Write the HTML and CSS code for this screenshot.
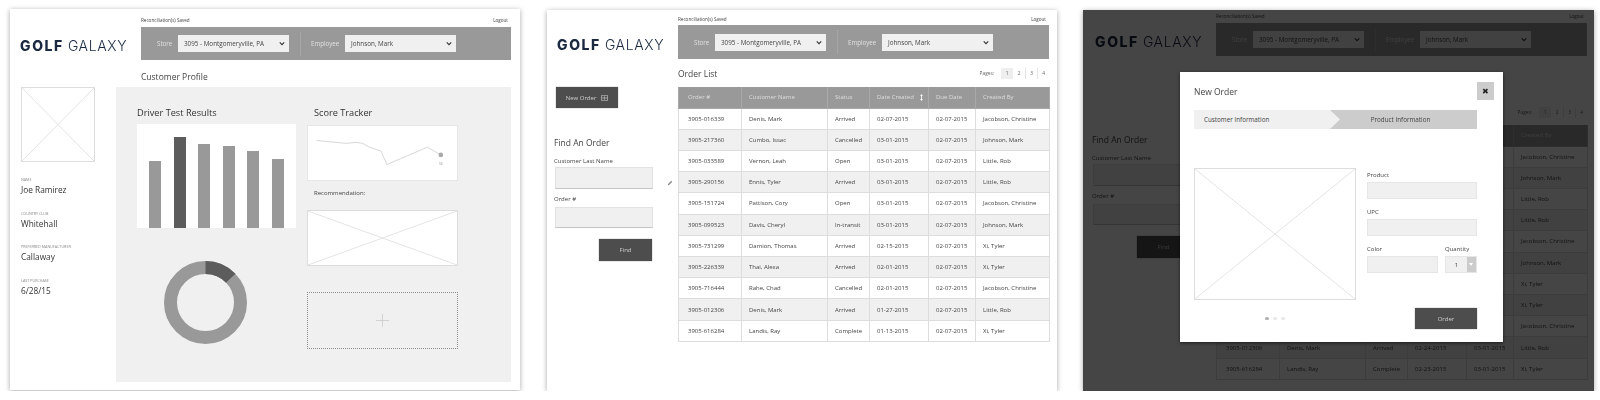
FILE: index.html
```html
<!DOCTYPE html>
<html>
  <head>
    <title>Golf Galaxy Wireframes</title>
    <link rel="stylesheet" href="styles.css">
  </head>

  <body>
    <div class="board">

      <!-- customer profile -->
      <section class="panel panel-profile">
        <header class="header">
          <div class="logo"><b>GOLF</b> GALAXY</div>
          <div class="header-main">
            <div class="top-links"><span>Reconciliation(s) Saved</span><span>Logout</span></div>
            <div class="top-bar">
              <span class="bar-label store-label">Store</span>
              <div class="select"><span>3095 - Montgomeryville, PA</span><svg class="chevron" viewBox="0 0 8 6"><path d="M1 1.5 4 4.5 7 1.5"/></svg></div>
              <span class="bar-divider"></span>
              <span class="bar-label employee-label">Employee</span>
              <div class="select"><span>Johnson, Mark</span><svg class="chevron" viewBox="0 0 8 6"><path d="M1 1.5 4 4.5 7 1.5"/></svg></div>
            </div>
          </div>
        </header>
        <h2 class="profile-title">Customer Profile</h2>
        <div class="profile">
          <aside class="sidebar">
            <div class="placeholder photo"><svg viewBox="0 0 100 100" preserveAspectRatio="none"><path d="M0 0 100 100M100 0 0 100"/></svg></div>
            <div class="field field-first"><p class="field-label">NAME</p><p class="field-value">Joe Ramirez</p></div>
            <div class="field"><p class="field-label">COUNTRY CLUB</p><p class="field-value">Whitehall</p></div>
            <div class="field"><p class="field-label">PREFERRED MANUFACTURER</p><p class="field-value">Callaway</p></div>
            <div class="field"><p class="field-label">LAST PURCHASE</p><p class="field-value">6/28/15</p></div>
          </aside>
          <div class="results">
            <div class="results-left">
              <h3 class="results-title">Driver Test Results</h3>
              <div class="bars">
                <div class="bar" style="height: 67px"></div>
                <div class="bar bar-dark" style="height: 91px"></div>
                <div class="bar" style="height: 84px"></div>
                <div class="bar" style="height: 82px"></div>
                <div class="bar" style="height: 77px"></div>
                <div class="bar" style="height: 69px"></div>
              </div>
              <svg class="donut" viewBox="0 0 83 83">
                <circle class="donut-base" cx="41.5" cy="41.5" r="35"/>
                <circle class="donut-part" cx="41.5" cy="41.5" r="35" pathLength="100" stroke-dasharray="12.8 87.2" transform="rotate(-90 41.5 41.5)"/>
              </svg>
            </div>
            <div class="results-right">
              <h3 class="results-title tracker-title">Score Tracker</h3>
              <div class="tracker">
                <svg viewBox="0 0 151 56">
                  <path class="tracker-line" d="M7 15 38 18 48 17 55 18 62 22 74 26 80 40 122 22 136 30"/>
                  <circle class="tracker-dot" cx="136" cy="30" r="2.4"/>
                  <text class="tracker-value" x="136" y="40" text-anchor="middle">56</text>
                </svg>
              </div>
              <p class="recommendation">Recommendation:</p>
              <div class="placeholder wide"><svg viewBox="0 0 100 100" preserveAspectRatio="none"><path d="M0 0 100 100M100 0 0 100"/></svg></div>
              <div class="dropzone"><svg viewBox="0 0 13 13"><path d="M6.5 0V13M0 6.5H13"/></svg></div>
            </div>
          </div>
        </div>
      </section>

      <!-- order list -->
      <section class="panel panel-orders">
        <header class="header">
          <div class="logo"><b>GOLF</b> GALAXY</div>
          <div class="header-main">
            <div class="top-links"><span>Reconciliation(s) Saved</span><span>Logout</span></div>
            <div class="top-bar">
              <span class="bar-label store-label">Store</span>
              <div class="select"><span>3095 - Montgomeryville, PA</span><svg class="chevron" viewBox="0 0 8 6"><path d="M1 1.5 4 4.5 7 1.5"/></svg></div>
              <span class="bar-divider"></span>
              <span class="bar-label employee-label">Employee</span>
              <div class="select"><span>Johnson, Mark</span><svg class="chevron" viewBox="0 0 8 6"><path d="M1 1.5 4 4.5 7 1.5"/></svg></div>
            </div>
          </div>
        </header>
        <div class="orders">
          <aside class="order-side">
            <button class="btn btn-new">New Order
              <svg class="new-icon" viewBox="0 0 8 7"><path d="M.5.5H7.5V6.5H.5ZM.5 3.5H7.5M4 1.5V5.5"/></svg>
            </button>
            <h3 class="find-title">Find An Order</h3>
            <p class="find-label">Customer Last Name</p>
            <div class="find-row">
              <div class="find-input"></div>
              <svg class="pencil" viewBox="0 0 8 8"><path d="M1 7 1.4 5.2 5.6 1 7 2.4 2.8 6.6Z"/></svg>
            </div>
            <p class="find-label find-label-next">Order #</p>
            <div class="find-input find-input-short"></div>
            <button class="btn btn-find">Find</button>
          </aside>
          <div class="order-main">
            <div class="list-head">
              <h2 class="list-title">Order List</h2>
              <div class="pager">
                <span class="pager-label">Pages:</span>
                <span class="page page-current">1</span><span class="page">2</span><span class="page page-line">3</span><span class="page page-line">4</span>
              </div>
            </div>
            <table class="order-table">
              <colgroup><col class="col-order"><col class="col-name"><col class="col-status"><col class="col-date"><col class="col-due"><col class="col-by"></colgroup>
              <thead>
                <tr><th>Order #</th><th>Customer Name</th><th>Status</th><th>Date Created <svg class="sort" viewBox="0 0 4 10"><path d="M2 0 4 3H0ZM2 10 0 7H4ZM1.4 3H2.6V7H1.4Z"/></svg></th><th>Due Date</th><th>Created By</th></tr>
              </thead>
              <tbody>
                <tr><td>3905-016339</td><td>Denis, Mark</td><td>Arrived</td><td>02-07-2015</td><td>02-07-2015</td><td>Jacobson, Christine</td></tr>
                <tr><td>3905-217360</td><td>Cumbo, Issac</td><td>Cancelled</td><td>03-01-2015</td><td>02-07-2015</td><td>Johnson, Mark</td></tr>
                <tr><td>3905-033589</td><td>Vernon, Leah</td><td>Open</td><td>03-01-2015</td><td>02-07-2015</td><td>Little, Rob</td></tr>
                <tr><td>3905-290156</td><td>Ennis, Tyler</td><td>Arrived</td><td>03-01-2015</td><td>02-07-2015</td><td>Little, Rob</td></tr>
                <tr><td>3905-151724</td><td>Pattison, Cory</td><td>Open</td><td>03-01-2015</td><td>02-07-2015</td><td>Jacobson, Christine</td></tr>
                <tr><td>3905-099523</td><td>Davis, Cheryl</td><td>In-transit</td><td>03-01-2015</td><td>02-07-2015</td><td>Johnson, Mark</td></tr>
                <tr><td>3905-731299</td><td>Damion, Thomas</td><td>Arrived</td><td>02-15-2015</td><td>02-07-2015</td><td>Xi, Tyler</td></tr>
                <tr><td>3905-226339</td><td>Thai, Alexa</td><td>Arrived</td><td>02-01-2015</td><td>02-07-2015</td><td>Xi, Tyler</td></tr>
                <tr><td>3905-716444</td><td>Rahe, Chad</td><td>Cancelled</td><td>02-01-2015</td><td>02-07-2015</td><td>Jacobson, Christine</td></tr>
                <tr><td>3905-012306</td><td>Denis, Mark</td><td>Arrived</td><td>01-27-2015</td><td>02-07-2015</td><td>Little, Rob</td></tr>
                <tr><td>3905-616284</td><td>Landis, Ray</td><td>Complete</td><td>01-13-2015</td><td>02-07-2015</td><td>Xi, Tyler</td></tr>
              </tbody>
            </table>
          </div>
        </div>
      </section>

      <!-- new order dialog over the order list -->
      <section class="panel panel-orders panel-dialog">
        <header class="header">
          <div class="logo"><b>GOLF</b> GALAXY</div>
          <div class="header-main">
            <div class="top-links"><span>Reconciliation(s) Saved</span><span>Logout</span></div>
            <div class="top-bar">
              <span class="bar-label store-label">Store</span>
              <div class="select"><span>3095 - Montgomeryville, PA</span><svg class="chevron" viewBox="0 0 8 6"><path d="M1 1.5 4 4.5 7 1.5"/></svg></div>
              <span class="bar-divider"></span>
              <span class="bar-label employee-label">Employee</span>
              <div class="select"><span>Johnson, Mark</span><svg class="chevron" viewBox="0 0 8 6"><path d="M1 1.5 4 4.5 7 1.5"/></svg></div>
            </div>
          </div>
        </header>
        <div class="orders">
          <aside class="order-side">
            <h3 class="find-title">Find An Order</h3>
            <p class="find-label">Customer Last Name</p>
            <div class="find-row"><div class="find-input"></div></div>
            <p class="find-label find-label-next">Order #</p>
            <div class="find-input find-input-short"></div>
            <button class="btn btn-find">Find</button>
          </aside>
          <div class="order-main">
            <div class="list-head">
              <div class="pager">
                <span class="pager-label">Pages:</span>
                <span class="page page-current">1</span><span class="page">2</span><span class="page page-line">3</span><span class="page page-line">4</span>
              </div>
            </div>
            <!-- cells behind the dialog are left empty -->
            <table class="order-table">
              <colgroup><col class="col-order"><col class="col-name"><col class="col-status"><col class="col-date"><col class="col-due"><col class="col-by"></colgroup>
              <thead>
                <tr><th></th><th></th><th></th><th></th><th></th><th>Created By</th></tr>
              </thead>
              <tbody>
                <tr><td></td><td></td><td></td><td></td><td></td><td>Jacobson, Christine</td></tr>
                <tr><td></td><td></td><td></td><td></td><td></td><td>Johnson, Mark</td></tr>
                <tr><td></td><td></td><td></td><td></td><td></td><td>Little, Rob</td></tr>
                <tr><td></td><td></td><td></td><td></td><td></td><td>Little, Rob</td></tr>
                <tr><td></td><td></td><td></td><td></td><td></td><td>Jacobson, Christine</td></tr>
                <tr><td></td><td></td><td></td><td></td><td></td><td>Johnson, Mark</td></tr>
                <tr><td></td><td></td><td></td><td></td><td></td><td>Xi, Tyler</td></tr>
                <tr><td></td><td></td><td></td><td></td><td></td><td>Xi, Tyler</td></tr>
                <tr><td></td><td></td><td></td><td></td><td></td><td>Jacobson, Christine</td></tr>
                <tr><td>3905-012306</td><td>Denis, Mark</td><td>Arrived</td><td>02-24-2015</td><td>03-01-2015</td><td>Little, Rob</td></tr>
                <tr><td>3905-616284</td><td>Landis, Ray</td><td>Complete</td><td>02-23-2015</td><td>03-01-2015</td><td>Xi, Tyler</td></tr>
              </tbody>
            </table>
          </div>
        </div>

        <div class="overlay"></div>
        <div class="modal">
          <div class="modal-head">
            <h2 class="modal-title">New Order</h2>
            <button class="modal-close">&#10006;</button>
          </div>
          <div class="stepper">
            <div class="step step-done">Customer Information</div>
            <div class="step step-active">Product Information</div>
          </div>
          <div class="modal-body">
            <div class="placeholder product-image"><svg viewBox="0 0 100 100" preserveAspectRatio="none"><path d="M0 0 100 100M100 0 0 100"/></svg></div>
            <div class="product-form">
              <label class="form-label form-label-first">Product</label>
              <div class="form-input"></div>
              <label class="form-label">UPC</label>
              <div class="form-input"></div>
              <div class="form-split">
                <div class="form-color">
                  <label class="form-label">Color</label>
                  <div class="form-input"></div>
                </div>
                <div class="form-qty">
                  <label class="form-label">Quantity</label>
                  <div class="qty-select"><span class="qty-value">1</span><span class="qty-arrow"></span></div>
                </div>
              </div>
            </div>
          </div>
          <div class="modal-foot">
            <div class="dots"><span class="dot dot-on"></span><span class="dot"></span><span class="dot"></span></div>
            <button class="btn btn-order">Order</button>
          </div>
        </div>
      </section>

    </div>
  </body>
</html>
```

FILE: styles.css
```css
:root {
  --bar-grey: #999999;
  --btn-dark: #4d4d4d;
  --bg-light: #f0f0f0;
  --line: #dddddd;
  --text-dark: #444444;
  --navy: #1b2a41;
}
* {
  box-sizing: border-box;
  margin: 0;
  padding: 0;
}
body {
  font-family: "Open Sans", "Liberation Sans", sans-serif;
  background: white;
  color: var(--text-dark);
  overflow: hidden;
}
h2,
h3 {
  font-weight: 400;
}

.board {
  display: grid;
  grid-template-columns: 537px 536px 511px;
  padding: 9px 0 0 10px;
  filter: blur(0.3px);
}

.panel {
  position: relative;
  height: 381px;
  background: white;
  box-shadow: 0 1px 5px rgba(0, 0, 0, 0.35);
  overflow: hidden;
}
.panel-profile {
  width: 510px;
  padding: 7px 0 0 10px;
}
.panel-orders {
  width: 510px;
  margin-top: 1px;
  padding: 5px 0 0 7px;
}
.panel-dialog {
  width: 511px;
  padding: 2px 0 0 9px;
}

/* header */
.header {
  display: flex;
  align-items: flex-end;
}
.logo {
  width: 124px;
  height: 33px;
  padding: 3px 0 0 3px;
  display: flex;
  align-items: center;
  gap: 4px;
  font-family: Inter, "Liberation Sans", sans-serif;
  font-size: 14px;
  font-weight: 300;
  letter-spacing: 0.65px;
  color: var(--navy);
  white-space: nowrap;
}
.logo b {
  font-weight: 800;
  letter-spacing: 1.6px;
}
.panel-profile .logo {
  width: 121px;
  padding-left: 0;
}
.header-main {
  width: 371px;
}
.panel-profile .header-main {
  width: 370px;
}
.top-links {
  display: flex;
  justify-content: space-between;
  height: 8px;
  margin-bottom: 2px;
  padding-right: 3px;
  font-size: 4.6px;
  line-height: 8px;
}
.panel-profile .top-links,
.panel-dialog .top-links {
  margin-bottom: 3px;
}
.top-bar {
  display: flex;
  align-items: center;
  height: 34px;
  padding-left: 16px;
  background: var(--bar-grey);
}
.panel-profile .top-bar,
.panel-dialog .top-bar {
  height: 33px;
}
.bar-label {
  font-size: 6.2px;
  color: #e0e0e0;
}
.store-label {
  width: 21px;
}
.employee-label {
  width: 34px;
}
.bar-divider {
  width: 1px;
  height: 24px;
  margin: 0 10px 0 11px;
  background: #a6a6a6;
}
.select {
  display: flex;
  justify-content: space-between;
  align-items: center;
  width: 111px;
  height: 17px;
  padding: 0 4px 0 6px;
  background: var(--bg-light);
  font-size: 6.3px;
  color: #444;
}
.chevron {
  width: 6px;
  height: 5px;
  fill: none;
  stroke: #333;
  stroke-width: 1.5;
}

/* customer profile */
.profile-title {
  height: 27px;
  padding: 5px 0 0 121px;
  display: flex;
  align-items: center;
  font-size: 8.5px;
}
.profile {
  display: grid;
  grid-template-columns: 96px 395px;
  height: 295px;
}
.placeholder {
  border: 1px solid var(--line);
  background: white;
}
.placeholder svg {
  display: block;
  width: 100%;
  height: 100%;
  fill: none;
  stroke: #e4e4e4;
}
.placeholder path {
  vector-effect: non-scaling-stroke;
}
.photo {
  width: 74px;
  height: 75px;
  margin-left: 1px;
}
.field {
  height: 21px;
  margin: 12.7px 0 0 1px;
  white-space: nowrap;
}
.field-first {
  margin-top: 14px;
}
.field-label {
  height: 7px;
  font-size: 3.7px;
  line-height: 7px;
  color: #888;
}
.field-value {
  margin-top: 1px;
  font-size: 8.3px;
  line-height: 12px;
  color: #333;
}
.results {
  display: grid;
  grid-template-columns: 159px 151px;
  column-gap: 11px;
  padding: 20px 0 0 21px;
  background: var(--bg-light);
}
.results-title {
  height: 12px;
  font-size: 9.2px;
  line-height: 12px;
  color: #333;
}
.tracker-title {
  padding-left: 7px;
}
.bars {
  display: flex;
  justify-content: space-between;
  align-items: flex-end;
  height: 104px;
  margin-top: 5px;
  padding: 0 12px;
  background: white;
}
.bar {
  width: 12.4px;
  background: var(--bar-grey);
}
.bar-dark {
  background: #5c5c5c;
}
.donut {
  display: block;
  width: 83px;
  height: 83px;
  margin: 33px 0 0 27px;
  fill: none;
  stroke-width: 13;
}
.donut-base {
  stroke: var(--bar-grey);
}
.donut-part {
  stroke: #5c5c5c;
}
.tracker {
  height: 56px;
  margin-top: 6px;
  background: white;
  border: 1px solid #e6e6e6;
}
.tracker svg {
  display: block;
  width: 100%;
  height: 100%;
}
.tracker-line {
  fill: none;
  stroke: #cccccc;
  stroke-width: 0.8;
}
.tracker-dot {
  fill: #aaaaaa;
}
.tracker-value {
  font-size: 3.5px;
  fill: #999;
}
.recommendation {
  display: flex;
  align-items: center;
  height: 29px;
  padding: 0 0 6px 7px;
  font-size: 6px;
}
.wide {
  height: 56px;
}
.dropzone {
  display: flex;
  justify-content: center;
  align-items: center;
  height: 57px;
  margin-top: 26px;
  border: 1px dotted #8c8c8c;
}
.dropzone svg {
  width: 13px;
  height: 13px;
  fill: none;
  stroke: #c4c4c4;
  stroke-width: 0.7;
}

/* order list */
.orders {
  display: flex;
}
.order-side {
  width: 124px;
}
.btn {
  border: none;
  background: var(--btn-dark);
  color: #cfcfcf;
  font-family: inherit;
  font-size: 6px;
  box-shadow: 0 0 1px rgba(0, 0, 0, 0.5);
}
.btn-new {
  display: flex;
  justify-content: center;
  align-items: center;
  gap: 5px;
  width: 62px;
  height: 21px;
  margin: 28px 0 0 2px;
}
.new-icon {
  width: 7px;
  height: 6px;
  fill: none;
  stroke: #cfcfcf;
  stroke-width: 0.7;
}
.find-title {
  height: 12px;
  margin-top: 29px;
  font-size: 8.5px;
  line-height: 12px;
}
.panel-dialog .find-title {
  margin-top: 78px;
}
.find-label {
  height: 8px;
  margin-top: 8px;
  font-size: 6px;
  line-height: 8px;
}
.find-label-next {
  margin-top: 6px;
}
.find-row {
  display: flex;
  align-items: flex-end;
  margin-top: 2px;
}
.find-input {
  width: 98px;
  height: 22px;
  background: var(--bg-light);
  border: 1px solid #e2e2e2;
  border-bottom: 1px solid #c4c4c4;
}
.find-row .find-input {
  margin-left: 1px;
}
.find-input-short {
  height: 21px;
  margin: 4px 0 0 1px;
}
.pencil {
  width: 6px;
  height: 6px;
  margin: 0 0 3px 14px;
  fill: #8c8c8c;
}
.btn-find {
  display: block;
  width: 53px;
  height: 22px;
  margin: 11px 0 0 45px;
}
.order-main {
  width: 371px;
}
.list-head {
  display: flex;
  justify-content: space-between;
  align-items: center;
  height: 28px;
}
.panel-dialog .list-head {
  height: 26px;
  margin-top: 43px;
}
.list-title {
  padding-top: 1px;
  font-size: 8.5px;
}
.pager {
  display: flex;
  align-items: center;
  margin-left: auto;
  font-size: 4.8px;
  color: #666;
}
.pager-label {
  margin-right: 7px;
}
.page {
  width: 12px;
  height: 11px;
  line-height: 11px;
  text-align: center;
}
.page-current {
  background: #eeeeee;
}
.page-line {
  border-left: 1px solid #e4e4e4;
}
.order-table {
  width: 371px;
  height: 255px;
  table-layout: fixed;
  border-collapse: collapse;
  font-size: 6px;
  border-bottom: 1px solid #cfcfcf;
}
.col-order {
  width: 63px;
}
.col-name {
  width: 86px;
}
.col-status {
  width: 42px;
}
.col-date {
  width: 59px;
}
.col-due {
  width: 47px;
}
.col-by {
  width: 74px;
}
.order-table th {
  height: 21px;
  padding-left: 7px;
  background: var(--bar-grey);
  border: 1px solid #a8a8a8;
  border-top: none;
  color: #dedede;
  font-weight: 400;
  text-align: left;
  white-space: nowrap;
}
.order-table td {
  padding-left: 7px;
  border: 1px solid var(--line);
  white-space: nowrap;
}
.order-table th:first-child,
.order-table td:first-child {
  padding-left: 9px;
}
.order-table tbody tr:nth-child(even) td {
  background: var(--bg-light);
}
.sort {
  width: 3px;
  height: 7px;
  margin-left: 5px;
  vertical-align: -1.5px;
  fill: white;
}

/* new order dialog */
.overlay {
  position: absolute;
  inset: 0;
  background: rgba(0, 0, 0, 0.73);
}
.modal {
  position: absolute;
  top: 62px;
  left: 97px;
  width: 323px;
  height: 270px;
  padding: 10px 9px 0 14px;
  background: white;
  box-shadow: 0 1px 3px rgba(0, 0, 0, 0.6);
}
.modal-head {
  display: flex;
  justify-content: space-between;
  align-items: center;
  height: 18px;
}
.modal-title {
  font-size: 8.5px;
}
.modal-close {
  width: 17.5px;
  height: 18px;
  border: none;
  background: #cccccc;
  color: #222;
  font-size: 8px;
}
.stepper {
  display: flex;
  width: 283px;
  height: 19px;
  margin-top: 10px;
  background: #cccccc;
  font-size: 6.3px;
}
.step {
  display: flex;
  align-items: center;
}
.step-done {
  width: 146px;
  padding-left: 10px;
  background: var(--bg-light);
  clip-path: polygon(0 0, 136px 0, 100% 50%, 136px 100%, 0 100%);
}
.step-active {
  flex: 1;
  justify-content: center;
  padding-right: 16px;
}
.modal-body {
  display: grid;
  grid-template-columns: 162px 110px;
  column-gap: 11px;
  width: 283px;
  margin-top: 39px;
}
.product-image {
  height: 132px;
}
.form-label {
  display: block;
  height: 8px;
  margin: 9px 0 3px;
  font-size: 6px;
  line-height: 8px;
}
.form-label-first {
  margin-top: 3px;
}
.form-input {
  height: 17px;
  background: var(--bg-light);
  border: 1px solid #e6e6e6;
}
.form-split {
  display: flex;
  gap: 7px;
}
.form-color {
  width: 71px;
}
.form-qty {
  width: 32px;
}
.qty-select {
  display: flex;
  height: 17px;
  background: var(--bg-light);
  border: 1px solid #e6e6e6;
}
.qty-value {
  flex: 1;
  font-size: 6px;
  line-height: 16px;
  text-align: center;
}
.qty-arrow {
  position: relative;
  width: 9px;
  background: #cccccc;
}
.qty-arrow::after {
  content: "";
  position: absolute;
  top: 6px;
  left: 2px;
  border: 2.5px solid transparent;
  border-top: 3px solid white;
}
.modal-foot {
  display: flex;
  align-items: center;
  margin-top: 8px;
}
.dots {
  display: flex;
  justify-content: center;
  gap: 4.5px;
  width: 162px;
  margin-right: 59px;
}
.dot {
  width: 3.5px;
  height: 3.5px;
  border-radius: 50%;
  background: #e8e8e8;
}
.dot-on {
  background: #b0b0b0;
}
.btn-order {
  width: 62px;
  height: 21px;
}
```
